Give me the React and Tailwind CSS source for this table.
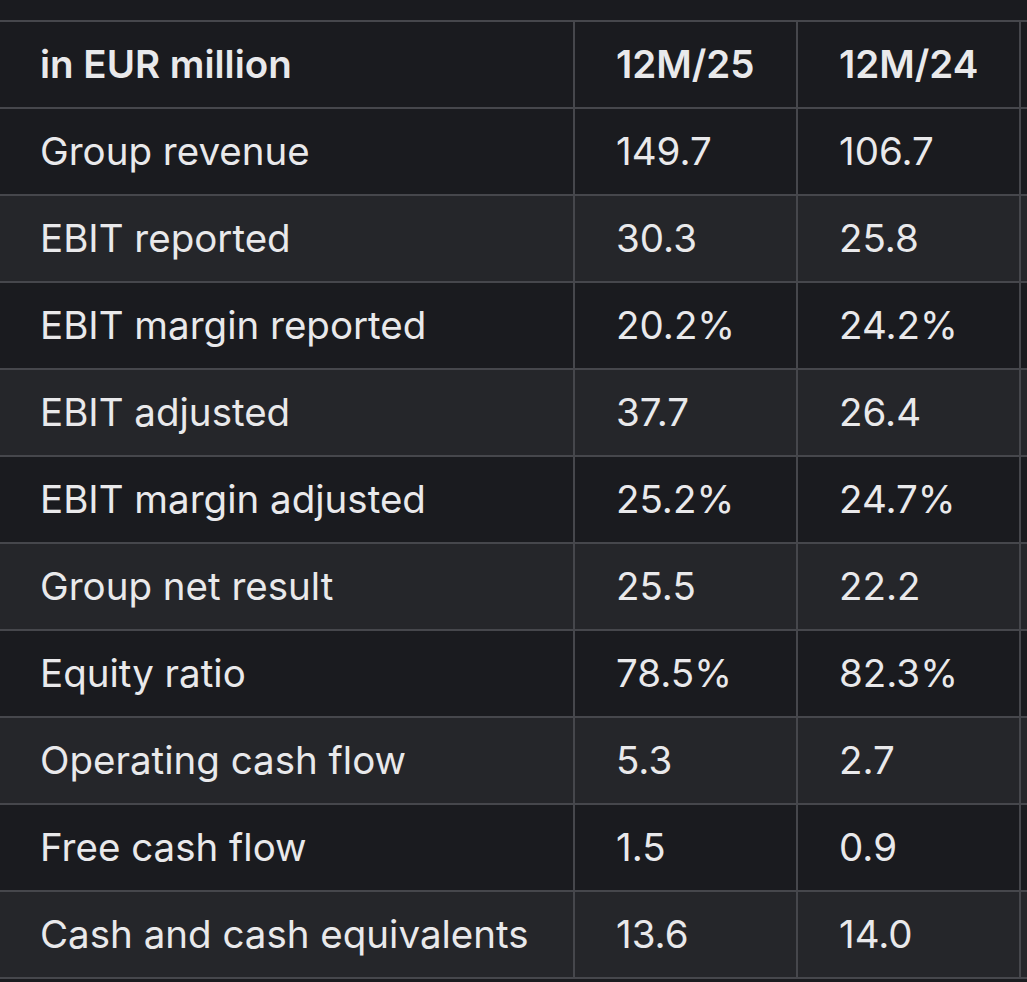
const rows = [
  ["Group revenue", "149.7", "106.7"],
  ["EBIT reported", "30.3", "25.8"],
  ["EBIT margin reported", "20.2%", "24.2%"],
  ["EBIT adjusted", "37.7", "26.4"],
  ["EBIT margin adjusted", "25.2%", "24.7%"],
  ["Group net result", "25.5", "22.2"],
  ["Equity ratio", "78.5%", "82.3%"],
  ["Operating cash flow", "5.3", "2.7"],
  ["Free cash flow", "1.5", "0.9"],
  ["Cash and cash equivalents", "13.6", "14.0"],
];

const Row = ({ cells, bold, light }) => (
  <div
    className={`flex h-[87px] border-t-2 border-[#46474c] ${light ? "bg-[#25262a]" : "bg-[#1a1b1f]"} ${bold ? "font-semibold" : "font-normal"}`}
  >
    <div className="w-[573px] shrink-0 flex items-center pl-10">{cells[0]}</div>
    <div className="w-[223px] shrink-0 flex items-center pl-[41px] border-l-2 border-[#46474c]">{cells[1]}</div>
    <div className="w-[223px] shrink-0 flex items-center pl-[41px] border-l-2 border-[#46474c]">{cells[2]}</div>
    <div className="flex-1 border-l-2 border-[#46474c]"></div>
  </div>
);

export default function App() {
  return (
    <div
      className="w-[1027px] h-[982px] overflow-hidden bg-[#1a1b1f] pt-5 text-[#e9e9eb] text-[38.5px]"
      style={{ fontFamily: "Inter, 'Noto Sans', sans-serif" }}
    >
      <Row cells={["in EUR million", "12M/25", "12M/24"]} bold />
      {rows.map((r, i) => (
        <Row key={r[0]} cells={r} light={i % 2 === 1} />
      ))}
      <div className="border-t-2 border-[#46474c]"></div>
    </div>
  );
}
